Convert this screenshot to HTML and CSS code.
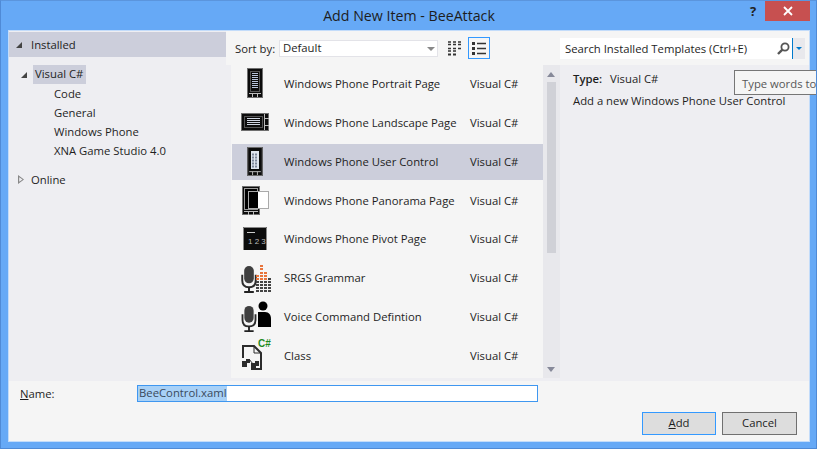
FILE: index.html
```html
<!DOCTYPE html>
<html>
<head>
    <meta charset="UTF-8" />
    <title>Add New Item - BeeAttack</title>
    <link rel="stylesheet" href="styles.css">
</head>
<body>
<svg class="defs" width="0" height="0">
    <symbol id="phone" viewBox="0 0 16 30">
        <rect x="0" y="0" width="16" height="30" fill="#0c0c0c" />
        <rect x="0.5" y="0.5" width="15" height="29" fill="none" stroke="#6f6f6f" />
        <path d="M2 25.5H14M5.5 25.5V29M10.5 25.5V29" stroke="#bbb" fill="none" />
    </symbol>
    <symbol id="mic" viewBox="0 0 16 28">
        <rect x="3" y="0" width="10" height="18" rx="5" fill="#3f3f3f" />
        <path d="M1 9V15C1 20 4 22 8 22C12 22 15 20 15 15V9" fill="none" stroke="#2c2c2c" stroke-width="2" />
        <path d="M8 22V26M3 27H13" stroke="#222" stroke-width="2" />
    </symbol>
</svg>
<div class="window">
    <div class="titlebar">
        <span class="title">Add New Item - BeeAttack</span>
        <span class="help">?</span>
        <span class="close">
            <svg width="10" height="10" viewBox="0 0 10 10"><path d="M1 1L9 9M9 1L1 9" stroke="#fff" stroke-width="1.8" /></svg>
        </span>
    </div>
    <div class="dialog">
        <div class="main">
            <div class="sidebar">
                <div class="tree-head"><i class="arrow-open"></i>Installed</div>
                <div class="tree">
                    <div class="tree-root"><i class="arrow-open"></i><span class="tree-sel">Visual C#</span></div>
                    <div class="tree-item">Code</div>
                    <div class="tree-item">General</div>
                    <div class="tree-item">Windows Phone</div>
                    <div class="tree-item">XNA Game Studio 4.0</div>
                </div>
                <div class="tree-online"><i class="arrow-closed"></i>Online</div>
            </div>
            <div class="content">
                <div class="toolbar">
                    <span class="sort-label">Sort by:</span>
                    <div class="combo">Default<i class="combo-arrow"></i></div>
                    <svg class="view-small" width="14" height="15" viewBox="0 0 14 15">
                        <path d="M0 1H3M5 1H8M10 1H13M0 3.500H3M5 3.500H8M10 3.500H13" stroke="#333" fill="none" stroke-width="1.6" />
                        <path d="M0 7.500H3M5 7.500H8M10 7.500H13M0 10H3M5 10H8" stroke="#333" fill="none" stroke-width="1.400" />
                        <path d="M0 13.500H3M5 13.500H8" stroke="#333" fill="none" stroke-width="2" />
                    </svg>
                    <div class="view-list">
                        <svg width="14" height="13" viewBox="0 0 14 13">
                            <path d="M0 0H3V3H0ZM0 5H3V8H0ZM0 10H3V13H0Z" fill="#333" />
                            <path d="M5 1.500H14M5 6.500H14M5 11.500H14" stroke="#333" stroke-width="1.6" />
                        </svg>
                    </div>
                    <div class="search">
                        <span class="search-text">Search Installed Templates (Ctrl+E)</span>
                        <svg class="search-icon" width="13" height="13" viewBox="0 0 13 13">
                            <circle cx="8" cy="5" r="3.6" fill="none" stroke="#555" stroke-width="1.8" />
                            <path d="M5.400 7.600L1 12" stroke="#555" stroke-width="2.400" />
                        </svg>
                        <div class="search-drop"><i></i></div>
                    </div>
                </div>
                <div class="lower">
                    <div class="list">
                        <div class="row">
                            <svg class="row-icon" width="40" height="36" viewBox="0 0 40 36">
                                <use href="#phone" x="11" y="2" width="16" height="30" />
                                <rect x="14.500" y="5.500" width="9" height="20" fill="none" stroke="#555" />
                                <path d="M16 7.500H22M16 9.500H22M16 11.500H22M16 13.500H22M16 15.500H22M16 17.500H22M16 19.500H22M16 21.500H22" stroke="#b9c5dc" />
                            </svg>
                            <span class="row-name">Windows Phone Portrait Page</span><span class="row-lang">Visual C#</span>
                        </div>
                        <div class="row">
                            <svg class="row-icon" width="40" height="36" viewBox="0 0 40 36">
                                <rect x="5" y="8" width="28" height="18" fill="#0c0c0c" />
                                <rect x="5.500" y="8.500" width="27" height="17" fill="none" stroke="#6f6f6f" />
                                <path d="M28.500 9V25M28.500 13.500H33M28.500 20.500H33" stroke="#bbb" />
                                <rect x="8.500" y="11.500" width="18" height="11" fill="none" stroke="#555" />
                                <path d="M11 13.500H24M11 15.500H24M11 17.500H24M11 19.500H24" stroke="#d0d6e2" />
                            </svg>
                            <span class="row-name">Windows Phone Landscape Page</span><span class="row-lang">Visual C#</span>
                        </div>
                        <div class="row row-sel">
                            <svg class="row-icon" width="40" height="36" viewBox="0 0 40 36">
                                <use href="#phone" x="11" y="3" width="16" height="29" />
                                <rect x="15" y="7" width="8" height="18" fill="#dfe4ee" />
                                <path d="M16 10.500H22M16 13.500H22M16 16.500H22M16 19.500H22M16 22.500H22" stroke="#7d8699" stroke-width="2" stroke-dasharray="2 1" />
                            </svg>
                            <span class="row-name">Windows Phone User Control</span><span class="row-lang">Visual C#</span>
                        </div>
                        <div class="row">
                            <svg class="row-icon" width="40" height="36" viewBox="0 0 40 36">
                                <rect x="6" y="3" width="18" height="29" fill="#0c0c0c" />
                                <rect x="6.500" y="3.500" width="17" height="28" fill="none" stroke="#6f6f6f" />
                                <path d="M8 28.500H22M12.500 28.500V32M17.500 28.500V32" stroke="#bbb" />
                                <rect x="8.500" y="5.500" width="13" height="21" fill="#000" stroke="#999" />
                                <rect x="12.500" y="8.500" width="20" height="17" fill="#fff" stroke="#aaa" />
                                <rect x="13" y="9" width="9" height="16" fill="#000" />
                            </svg>
                            <span class="row-name">Windows Phone Panorama Page</span><span class="row-lang">Visual C#</span>
                        </div>
                        <div class="row">
                            <svg class="row-icon" width="40" height="36" viewBox="0 0 40 36">
                                <rect x="7" y="6" width="24" height="23" fill="#0c0c0c" />
                                <path d="M7.500 29V6.500H30.500V29" fill="none" stroke="#888" />
                                <path d="M11 11.500H19" stroke="#ccc" />
                                <text class="pivot-text" x="12" y="23">1 2 3</text>
                            </svg>
                            <span class="row-name">Windows Phone Pivot Page</span><span class="row-lang">Visual C#</span>
                        </div>
                        <div class="row">
                            <svg class="row-icon" width="40" height="36" viewBox="0 0 40 36">
                                <use href="#mic" x="5" y="6" width="16" height="27" />
                                <path d="M24 6H27M24 9H27M24 13H27M28 13H31M20 16H23M24 16H27M28 16H31M20 19H23M24 19H27M28 19H31" stroke="#e8743b" stroke-width="2.200" />
                                <path d="M20 22H23M24 22H27M28 22H31M32 22H35M32 19H35M20 25H23M24 25H27M28 25H31M32 25H35M20 28H23M24 28H27M28 28H31M32 28H35M20 31H23M24 31H27M28 31H31M32 31H35" stroke="#444" stroke-width="2.200" />
                            </svg>
                            <span class="row-name">SRGS Grammar</span><span class="row-lang">Visual C#</span>
                        </div>
                        <div class="row">
                            <svg class="row-icon" width="40" height="36" viewBox="0 0 40 36">
                                <circle cx="27" cy="7" r="4.500" fill="#000" />
                                <path d="M19 13H29C33 13 35 16 35 20V28H19Z" fill="#000" />
                                <rect x="4" y="6" width="18" height="22" fill="#f5f5f5" />
                                <use href="#mic" x="5" y="7" width="16" height="26" />
                            </svg>
                            <span class="row-name">Voice Command Defintion</span><span class="row-lang">Visual C#</span>
                        </div>
                        <div class="row">
                            <svg class="row-icon" width="40" height="36" viewBox="0 0 40 36">
                                <path d="M7 20V8H18L25 15V31H20" fill="none" stroke="#2c2c2c" stroke-width="2" />
                                <path d="M18 8V15H25" fill="none" stroke="#2c2c2c" />
                                <path d="M6 23H10V21H14V25H11V29H6ZM15 25H19V23H23V28H20V32H15Z" fill="#2c2c2c" />
                                <path d="M13 21L17 26" stroke="#2c2c2c" />
                                <text class="cs-text" x="22" y="9">C#</text>
                            </svg>
                            <span class="row-name">Class</span><span class="row-lang">Visual C#</span>
                        </div>
                    </div>
                    <div class="scrollbar">
                        <i class="scroll-up"></i>
                        <div class="scroll-thumb"></div>
                        <i class="scroll-down"></i>
                    </div>
                    <div class="details">
                        <div class="detail-type"><b>Type:</b><span>Visual C#</span></div>
                        <div class="detail-desc">Add a new Windows Phone User Control</div>
                    </div>
                </div>
            </div>
        </div>
        <div class="footer">
            <div class="name-row">
                <span class="name-label"><u>N</u>ame:</span>
                <div class="name-input"><span class="name-sel">BeeControl.xaml</span></div>
            </div>
            <div class="buttons">
                <div class="btn btn-default"><u>A</u>dd</div>
                <div class="btn btn-cancel">Cancel</div>
            </div>
        </div>
    </div>
    <div class="tooltip">Type words to</div>
</div>
</body>
</html>
```

FILE: styles.css
```css
* {
    box-sizing: border-box;
}

html, body {
    margin: 0;
    width: 817px;
    height: 449px;
    overflow: hidden;
}

body {
    font-family: "Open Sans", "Noto Sans", sans-serif;
    font-size: 11.3px;
    color: #1e1e1e;
}

.defs {
    position: absolute;
}

.window {
    position: relative;
    width: 817px;
    height: 449px;
    overflow: hidden;
    background-color: #66a9f6;
    border: 1px solid #4f8ad6;
    border-top-color: #5b95dd;
    padding: 0 6px 6px 7px;
    display: flex;
    flex-direction: column;
}

.titlebar {
    height: 29px;
    flex: none;
    display: flex;
    position: relative;
    justify-content: center;
    padding-top: 5px;
}

.title {
    font-size: 14.2px;
    line-height: 19px;
    color: #1d1d1d;
}

.help {
    position: absolute;
    left: 742px;
    top: 1px;
    font-weight: bold;
    font-size: 13px;
    color: #222;
}

.close {
    position: absolute;
    left: 757px;
    top: 0;
    width: 45px;
    height: 20px;
    background-color: #c75050;
    display: flex;
    align-items: center;
    justify-content: center;
}

.dialog {
    flex: 1;
    border: 1px solid #c3dcfa;
    background-color: #f5f5f5;
    display: flex;
    flex-direction: column;
}

.main {
    height: 350px;
    flex: none;
    display: flex;
    background-color: #eeeef2;
}

.sidebar {
    width: 217px;
    flex: none;
    padding-top: 1px;
}

.tree-head {
    height: 25px;
    background-color: #cccedb;
    display: flex;
    align-items: center;
    padding-left: 7px;
}

.arrow-open {
    width: 0;
    height: 0;
    border-style: solid;
    border-width: 0 0 6px 6px;
    border-color: transparent transparent #444 transparent;
}

.tree-head .arrow-open {
    margin-right: 9px;
}

.tree {
    padding-top: 8px;
}

.tree-root {
    height: 19px;
    display: flex;
    align-items: center;
    padding-left: 12px;
}

.tree-root .arrow-open {
    margin-right: 6px;
}

.tree-sel {
    background-color: #cccedb;
    width: 53px;
    height: 19px;
    line-height: 18px;
    padding-left: 2px;
}

.tree-item {
    height: 19px;
    line-height: 19px;
    padding-left: 45px;
}

.tree-online {
    display: flex;
    align-items: center;
    height: 19px;
    margin-top: 10px;
    padding-left: 9px;
}

.arrow-closed {
    width: 6px;
    height: 9px;
    margin-right: 7px;
    background-color: #888;
    clip-path: polygon(0 0, 100% 50%, 0 100%, 0 0, 20% 25%, 20% 75%, 75% 50%, 20% 25%);
}

.content {
    flex: 1;
    display: flex;
    flex-direction: column;
}

.toolbar {
    height: 34px;
    flex: none;
    background-color: #f5f5f5;
    display: flex;
    align-items: center;
    padding-left: 9px;
}

.sort-label {
    width: 44px;
    flex: none;
    margin-top: 1px;
}

.combo {
    width: 159px;
    height: 17px;
    background-color: #fff;
    border: 1px solid #e3e3e8;
    padding-left: 3px;
    line-height: 14px;
    position: relative;
    margin-top: 1px;
}

.combo-arrow {
    position: absolute;
    right: 2px;
    top: 6px;
    width: 0;
    height: 0;
    border-style: solid;
    border-width: 4px 4px 0 4px;
    border-color: #888 transparent transparent transparent;
}

.view-small {
    margin-left: 10px;
    flex: none;
}

.view-list {
    margin-left: 6px;
    width: 22px;
    height: 22px;
    border: 1px solid #3399ff;
    display: flex;
    align-items: center;
    justify-content: center;
    flex: none;
}

.search {
    margin-left: 70px;
    width: 245px;
    height: 21px;
    background-color: #fff;
    display: flex;
    align-items: center;
    padding-left: 5px;
    flex: none;
}

.search-text {
    flex: 1;
    white-space: nowrap;
}

.search-icon {
    flex: none;
    margin-right: 2px;
}

.search-drop {
    flex: none;
    width: 13px;
    height: 21px;
    background-color: #e8e8ec;
    border-left: 1px solid #007acc;
    display: flex;
    align-items: center;
    justify-content: center;
}

.search-drop i {
    width: 0;
    height: 0;
    border-style: solid;
    border-width: 3px 3px 0 3px;
    border-color: #007acc transparent transparent transparent;
}

.lower {
    flex: 1;
    display: flex;
    padding-left: 5px;
    align-items: flex-start;
}

.list {
    width: 312px;
    height: 313px;
    background-color: #f5f5f5;
    padding-top: 1px;
    padding-left: 1px;
}

.row {
    height: 36px;
    margin-bottom: 2.86px;
    display: flex;
    line-height: 36px;
    white-space: nowrap;
}

.row-sel {
    background-color: #cccedb;
}

.row-icon {
    flex: none;
    display: block;
    margin-left: 4px;
    margin-right: 8px;
}

.row-name {
    width: 186px;
    flex: none;
}

.pivot-text {
    font-family: "Liberation Sans", sans-serif;
    font-size: 8px;
    fill: #bbb;
}

.cs-text {
    font-family: "Liberation Sans", sans-serif;
    font-size: 10px;
    font-weight: bold;
    fill: #1e8a1e;
}

.scrollbar {
    width: 17px;
    height: 313px;
    flex: none;
    background-color: #e8e8ec;
    position: relative;
}

.scroll-up, .scroll-down {
    position: absolute;
    left: 4px;
    width: 0;
    height: 0;
    border-style: solid;
}

.scroll-up {
    top: 7px;
    border-width: 0 4.5px 5px 4.5px;
    border-color: transparent transparent #868999 transparent;
}

.scroll-down {
    bottom: 6px;
    border-width: 5px 4.5px 0 4.5px;
    border-color: #868999 transparent transparent transparent;
}

.scroll-thumb {
    position: absolute;
    top: 17px;
    left: 4px;
    width: 9px;
    height: 171px;
    background-color: #d0d1d7;
}

.details {
    flex: 1;
    padding-left: 13px;
    padding-top: 5px;
}

.detail-type {
    display: flex;
    line-height: 18px;
}

.detail-type b {
    width: 37px;
    font-weight: 600;
}

.detail-desc {
    margin-top: 4px;
    line-height: 17px;
    white-space: nowrap;
}

.footer {
    flex: 1;
    padding: 4px 12px 0 11px;
    background-color: #f5f5f5;
}

.name-row {
    display: flex;
    align-items: center;
}

.name-label {
    width: 117px;
    flex: none;
}

.name-input {
    width: 401px;
    height: 17px;
    border: 1px solid #3f97f0;
    background-color: #fff;
    display: flex;
    color: #3a4a5c;
}

.name-sel {
    background-color: #a8d1f7;
    line-height: 14px;
    width: 89px;
    padding-left: 1px;
    white-space: nowrap;
}

.buttons {
    margin-top: 10px;
    display: flex;
    justify-content: flex-end;
    gap: 6px;
}

.btn {
    height: 23px;
    background-color: #dddddd;
    text-align: center;
    line-height: 20px;
}

.btn-default {
    width: 74px;
    border: 1px solid #3399ff;
}

.btn-cancel {
    width: 75px;
    border: 1px solid #707070;
}

.tooltip {
    position: absolute;
    left: 733px;
    top: 69px;
    width: 120px;
    height: 25px;
    padding-left: 7px;
    line-height: 25px;
    background-color: #f5f5f5;
    border: 1px solid #767676;
    color: #575757;
    white-space: nowrap;
}
```
